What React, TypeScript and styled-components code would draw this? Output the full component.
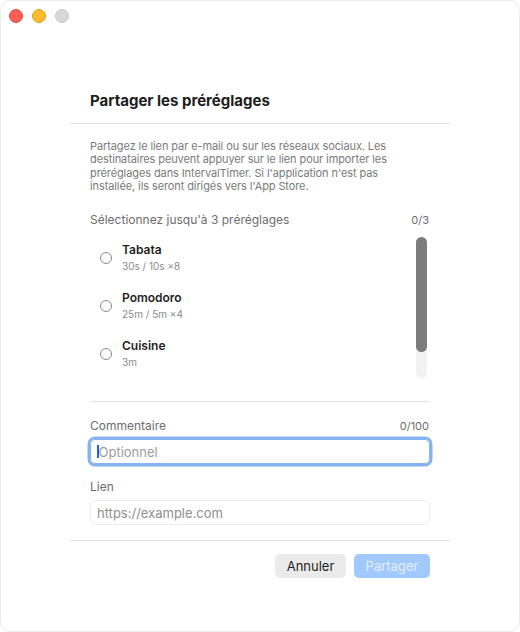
import styled, { createGlobalStyle } from "styled-components";

const GlobalStyle = createGlobalStyle`
	html, body {
		margin: 0;
		padding: 0;
		background: #ffffff;
	}
	* {
		box-sizing: border-box;
	}
`;

const Window = styled.div`
	display: flex;
	flex-direction: column;
	width: 520px;
	height: 632px;
	border-radius: 10px;
	box-shadow: inset 0 0 0 1px rgba(0,0,0,0.07);
	background: #ffffff;
	overflow: hidden;
	font-family: Inter, "Noto Sans", sans-serif;
	color: #1e1e1e;
`;

const TitleBar = styled.div`
	display: flex;
	align-items: center;
	gap: 9px;
	height: 32px;
	padding-left: 9px;
`;

const Light = styled.div<{ color: string, edge: string }>`
	width: 14px;
	height: 14px;
	border-radius: 50%;
	background: ${({ color }) => color};
	border: 0.5px solid ${({ edge }) => edge};
`;

const Sheet = styled.div`
	display: flex;
	flex-direction: column;
	margin: 0 70px;
	padding-top: 59px;
`;

const Header = styled.div`
	padding: 0 20px 12px;
	border-bottom: 1px solid #e3e3e3;
`;

const Title = styled.div`
	font-size: 15px;
	line-height: 20px;
	font-weight: 700;
	color: #1d1d1d;
`;

const Body = styled.div`
	display: flex;
	flex-direction: column;
	padding: 16px 20px 15px;
	border-bottom: 1px solid #e3e3e3;
`;

const Description = styled.p`
	margin: 0;
	font-size: 11px;
	line-height: 13.33px;
	color: #7a7a7a;
	white-space: nowrap;
	letter-spacing: -0.1px;
`;

const Row = styled.div<{ top: number }>`
	display: flex;
	justify-content: space-between;
	align-items: baseline;
	margin-top: ${({ top }) => top}px;
`;

const Label = styled.div`
	font-size: 12px;
	line-height: 15px;
	color: #6d6d6d;
`;

const Counter = styled.div`
	font-size: 11px;
	color: #6d6d6d;
	padding-right: 1px;
`;

const ListBox = styled.div`
	display: flex;
	align-items: flex-start;
	height: 142px;
	margin: 10px 3px 0 0;
`;

const Items = styled.div`
	flex: 1;
	display: flex;
	flex-direction: column;
	padding-top: 1px;
`;

const Track = styled.div`
	display: flex;
	flex-direction: column;
	width: 11px;
	height: 141px;
	border-radius: 6px;
	background: #f2f2f2;
`;

const Thumb = styled.div`
	height: 115px;
	border-radius: 6px;
	background: #7b7b7b;
`;

const Item = styled.div`
	display: flex;
	align-items: center;
	gap: 10px;
	height: 48px;
	padding: 4px 0 13px 10px;
`;

const Radio = styled.div`
	width: 12px;
	height: 12px;
	border-radius: 50%;
	border: 1px solid #8c8c8c;
	background: #fff;
	margin-top: 1px;
`;

const ItemText = styled.div`
	display: flex;
	flex-direction: column;
`;

const ItemName = styled.div`
	font-size: 12px;
	line-height: 15px;
	font-weight: 600;
	color: #1f1f1f;
`;

const ItemSub = styled.div`
	margin-top: 3px;
	font-size: 10px;
	line-height: 13px;
	color: #8a8a8a;
`;

const Divider = styled.div`
	height: 1px;
	background: #e3e3e3;
	margin-top: 22px;
`;

const Field = styled.div<{ top: number }>`
	display: flex;
	flex-direction: column;
	gap: 6px;
	margin-top: ${({ top }) => top}px;
`;

const Input = styled.input`
	width: 340px;
	height: 25px;
	padding: 0 6px;
	border-radius: 5px;
	font-family: inherit;
	font-size: 13px;
	color: #1e1e1e;
	outline: none;
	border: 1px solid #ececec;
	background: #fff;

	&::placeholder {
		color: #8e8e8e;
	}
`;

const FocusWrap = styled.div`
	display: flex;
	align-items: center;
	width: 340px;
	height: 25px;
	padding: 0 6px;
	border-radius: 5px;
	border: 1px solid #86b2f2;
	box-shadow: 0 0 0 2.5px #86b2f2;
	font-size: 13px;
	color: #9b9b9b;
`;

const Caret = styled.span`
	width: 1.5px;
	height: 13px;
	background: #1a5ff0;
`;

const Footer = styled.div`
	display: flex;
	justify-content: flex-end;
	gap: 8px;
	padding: 13px 20px 0;
`;

const Button = styled.button<{ primary?: boolean, width: number }>`
	width: ${({ width }) => width}px;
	height: 23.5px;
	padding: 0;
	border: none;
	border-radius: 5px;
	font-family: inherit;
	font-size: 13px;
	background: ${({ primary }) => primary ? "#a2c9fd" : "#ebebeb"};
	color: ${({ primary }) => primary ? "#e3efff" : "#1e1e1e"};
`;

const presets = [
	{ name: "Tabata", detail: "30s / 10s ×8" },
	{ name: "Pomodoro", detail: "25m / 5m ×4" },
	{ name: "Cuisine", detail: "3m" },
];

export default function App() {
	return (
		<>
			<GlobalStyle />
			<Window>
				<TitleBar>
					<Light color="#fe5f57" edge="#e2463f" />
					<Light color="#febc2e" edge="#e1a116" />
					<Light color="#d8d8d8" edge="#c8c8c8" />
				</TitleBar>
				<Sheet>
					<Header>
						<Title>Partager les préréglages</Title>
					</Header>
					<Body>
						<Description>
							Partagez le lien par e-mail ou sur les réseaux sociaux. Les<br />
							destinataires peuvent appuyer sur le lien pour importer les<br />
							préréglages dans IntervalTimer. Si l'application n'est pas<br />
							installée, ils seront dirigés vers l'App Store.
						</Description>
						<Row top={19}>
							<Label>Sélectionnez jusqu'à 3 préréglages</Label>
							<Counter>0/3</Counter>
						</Row>
						<ListBox>
							<Items>
								{presets.map((p) => (
									<Item key={p.name}>
										<Radio />
										<ItemText>
											<ItemName>{p.name}</ItemName>
											<ItemSub>{p.detail}</ItemSub>
										</ItemText>
									</Item>
								))}
							</Items>
							<Track>
								<Thumb />
							</Track>
						</ListBox>
						<Divider />
						<Field top={16}>
							<Row top={0}>
								<Label>Commentaire</Label>
								<Counter>0/100</Counter>
							</Row>
							<FocusWrap>
								<Caret />
								<span>Optionnel</span>
							</FocusWrap>
						</Field>
						<Field top={15}>
							<Label>Lien</Label>
							<Input placeholder="https://example.com" />
						</Field>
					</Body>
					<Footer>
						<Button width={71}>Annuler</Button>
						<Button primary width={76}>Partager</Button>
					</Footer>
				</Sheet>
			</Window>
		</>
	);
}
